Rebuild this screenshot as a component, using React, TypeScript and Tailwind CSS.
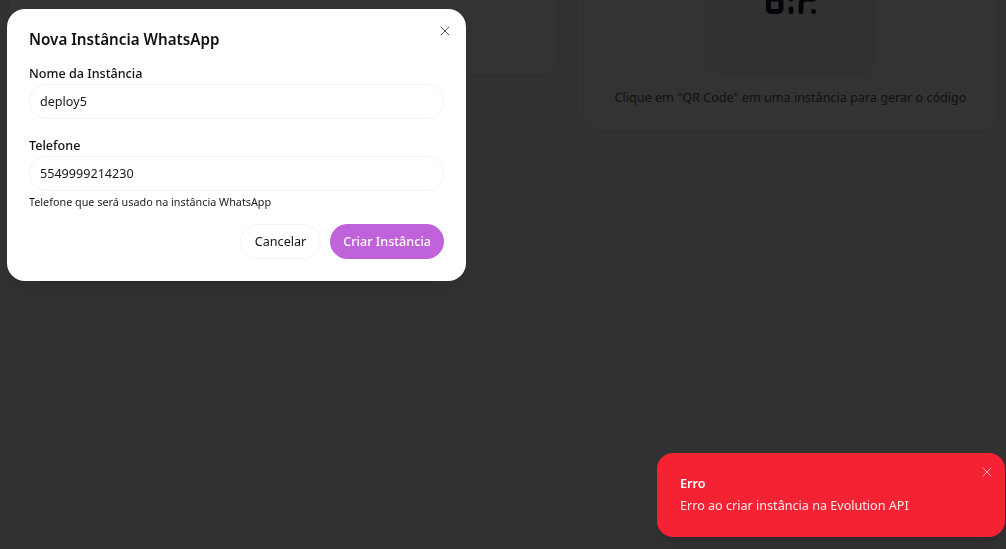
import { X, QrCode } from 'lucide-react';

const App = () => {
  return (
    <div
      className="relative h-screen w-full overflow-hidden bg-[#fafafa]"
      style={{ fontFamily: '"Noto Sans", "Open Sans", sans-serif' }}
    >
      {/* page behind the modal */}
      <div className="-mt-[122px] flex items-start gap-[25px] pl-2">
        <div className="h-[198px] w-[550px] rounded-2xl border border-gray-200 bg-white" />
        <div className="flex w-[415px] flex-col items-center rounded-2xl border border-gray-200 bg-white px-6 pt-6 pb-[23px]">
          <div className="flex h-[172px] w-[172px] items-center justify-center rounded-2xl bg-gray-100">
            <QrCode size={60} className="text-gray-900" />
          </div>
          <p className="mt-[13px] text-[12.6px] leading-5 text-gray-600">
            Clique em "QR Code" em uma instância para gerar o código
          </p>
        </div>
      </div>

      {/* overlay */}
      <div className="fixed inset-0 bg-black/80" />

      {/* dialog */}
      <div className="absolute top-[9px] left-[7px] w-[459px] rounded-[18px] bg-white px-[22px] pt-4 pb-[22px] shadow-lg">
        <button className="absolute top-[14px] right-[13px] text-gray-600" aria-label="Fechar">
          <X size={16} strokeWidth={1.5} />
        </button>
        <h2 className="text-[15.2px] leading-7 font-semibold text-[#111]">Nova Instância WhatsApp</h2>

        <div className="mt-[11px]">
          <label className="block text-[12.6px] leading-5 font-medium text-[#111]">Nome da Instância</label>
          <div className="flex h-[35px] items-center rounded-full border border-gray-100 px-[10px] pt-[2px] text-[12.6px] text-[#1a1a1a]">
            deploy5
          </div>
        </div>

        <div className="mt-[17px]">
          <label className="block text-[12.6px] leading-5 font-medium text-[#111]">Telefone</label>
          <div className="flex h-[35px] items-center rounded-full border border-gray-100 px-[10px] pt-[2px] text-[12.6px] text-[#1a1a1a]">
            5549999214230
          </div>
          <p className="mt-[3px] text-[10.8px] leading-4 text-[#222]">Telefone que será usado na instância WhatsApp</p>
        </div>

        <div className="mt-[14px] flex justify-end gap-[9px]">
          <button className="h-[35px] rounded-full border border-gray-100 bg-white px-[14px] pt-[2px] text-[12.6px] text-[#111]">
            Cancelar
          </button>
          <button className="h-[35px] rounded-full bg-[#c063da] px-[13px] pt-[2px] text-[12.6px] font-medium text-white">
            Criar Instância
          </button>
        </div>
      </div>

      {/* toast */}
      <div className="absolute right-[1px] bottom-[12px] w-[348px] rounded-2xl bg-[#f42232] pt-[21px] pr-6 pb-[21px] pl-[23px] text-white shadow-lg">
        <button className="absolute top-[11px] right-[10px] text-white/60" aria-label="Fechar">
          <X size={16} strokeWidth={1.5} />
        </button>
        <p className="text-[12.6px] leading-5 font-semibold">Erro</p>
        <p className="mt-[2px] text-[12.6px] leading-5 text-white/90">Erro ao criar instância na Evolution API</p>
      </div>
    </div>
  );
};

export default App;
